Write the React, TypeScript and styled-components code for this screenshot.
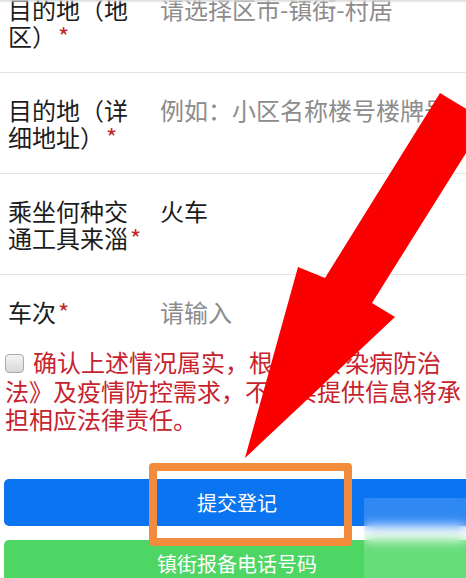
import React from 'react'
import styled, { createGlobalStyle } from 'styled-components'

const GlobalStyle = createGlobalStyle`
  html, body {
    margin: 0;
    padding: 0;
    background: #fff;
  }
  body {
    font-family: "Noto Sans CJK SC", "Noto Sans", sans-serif;
  }
`

const Page = styled.div`
  position: relative;
  width: 466px;
  height: 578px;
  overflow: hidden;
  background: #fff;
`

const TopShade = styled.div`
  position: absolute;
  top: 0;
  left: 0;
  right: 0;
  height: 3px;
  background: linear-gradient(#d9d9d9, rgba(255, 255, 255, 0));
`

// page is scrolled: first row sits partly above the fold
const Form = styled.div`
  margin-top: -28px;
`

const Row = styled.div<{ $last?: boolean }>`
  display: flex;
  align-items: flex-start;
  padding: 23px 0 23px 8px;
  border-bottom: ${({ $last }) => ($last ? 'none' : '1px solid #e4e4e4')};
`

const Label = styled.div`
  width: 136px;
  flex-shrink: 0;
  font-size: 24px;
  line-height: 27px;
  color: #1c1c1c;
`

const Req = styled.span`
  color: #c6262e;
  margin-left: 2px;
`

const Value = styled.div<{ $filled?: boolean }>`
  margin-left: 16px;
  flex: 1;
  min-width: 0;
  font-size: 24px;
  line-height: 27px;
  white-space: nowrap;
  overflow: hidden;
  color: ${({ $filled }) => ($filled ? '#1c1c1c' : '#8c8c8c')};
`

const Notice = styled.div`
  margin-top: 0;
  padding: 0 5px;
  font-size: 24px;
  line-height: 28.5px;
  color: #c7232d;
`

const Check = styled.span`
  display: inline-block;
  box-sizing: border-box;
  width: 19px;
  height: 19px;
  margin-right: 9px;
  vertical-align: -1px;
  border: 1px solid #a9a9a9;
  border-radius: 4px;
  background: linear-gradient(#f4f4f4, #d8d8d8);
`

const Buttons = styled.div`
  display: flex;
  flex-direction: column;
  gap: 14px;
  margin: 45px -10px 0 4px;
`

const Button = styled.div<{ $color: string }>`
  height: 47px;
  display: flex;
  align-items: center;
  justify-content: center;
  border-radius: 5px;
  background: ${({ $color }) => $color};
  color: #fff;
  font-size: 20px;
  padding-right: 6px;
`

const Highlight = styled.div`
  position: absolute;
  left: 149px;
  top: 463px;
  width: 203px;
  height: 83px;
  box-sizing: border-box;
  border: 8px solid #f28b3b;
  border-radius: 4px;
`

const Arrow = styled.svg`
  position: absolute;
  left: 0;
  top: 0;
  pointer-events: none;
`

const Watermark = styled.div`
  position: absolute;
  left: 364px;
  top: 498px;
  right: 0;
  bottom: 0;
  backdrop-filter: blur(6px);
  background: rgba(255, 255, 255, 0.15);
`

const rows = [
  { label: '目的地（地区）', value: '请选择区市-镇街-村居' },
  { label: '目的地（详细地址）', value: '例如：小区名称楼号楼牌号' },
  { label: '乘坐何种交通工具来淄', value: '火车', filled: true },
  { label: '车次', value: '请输入' },
]

export default function App() {
  return (
    <>
      <GlobalStyle />
      <Page>
        <Form>
          {rows.map((r, i) => (
            <Row key={r.label} $last={i === rows.length - 1}>
              <Label>
                {r.label}
                <Req>*</Req>
              </Label>
              <Value $filled={r.filled}>{r.value}</Value>
            </Row>
          ))}
        </Form>
        <Notice>
          <Check />
          确认上述情况属实，根据《传染病防治法》及疫情防控需求，不如实提供信息将承担相应法律责任。
        </Notice>
        <Buttons>
          <Button $color="#0b74f1">提交登记</Button>
          <Button $color="#4dd663">镇街报备电话号码</Button>
        </Buttons>
        <TopShade />
        <Watermark />
        <Highlight />
        <Arrow width="466" height="578" viewBox="0 0 466 578">
          <polygon
            points="440,93 486,121 372,303 395,317 245,458 298,267 325,278"
            fill="#fb0000"
          />
        </Arrow>
      </Page>
    </>
  )
}
